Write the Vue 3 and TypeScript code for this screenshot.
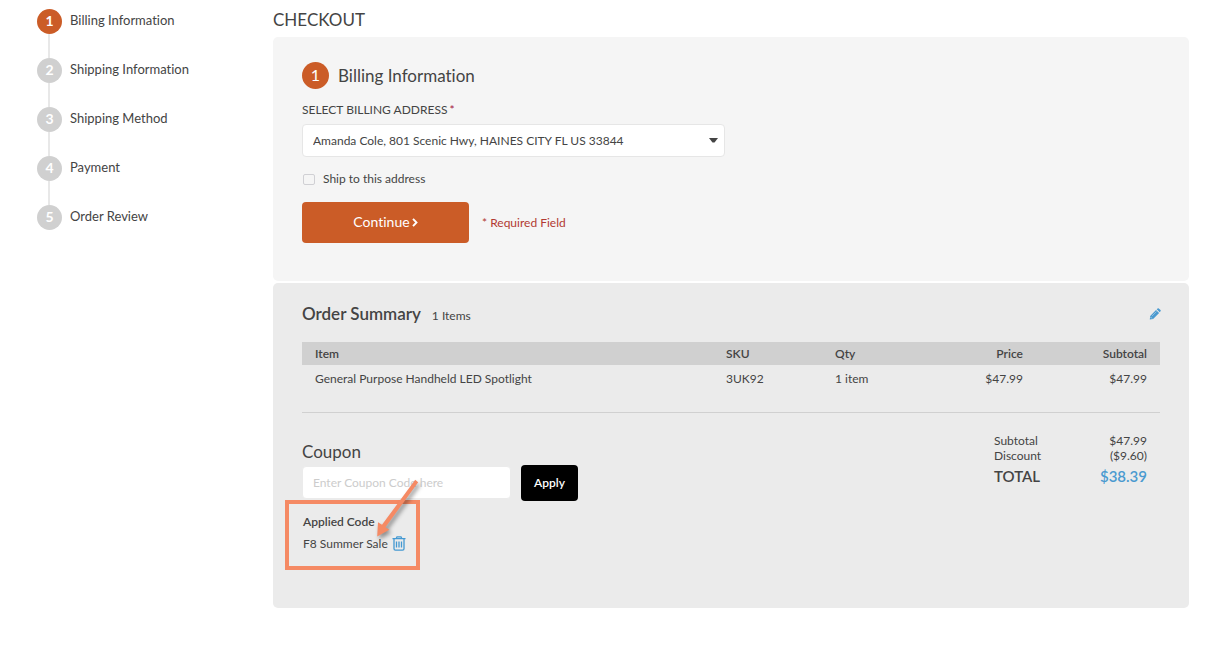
<script setup lang="ts">
import { ref } from 'vue'

interface Step {
  id: number
  label: string
}

interface LineItem {
  name: string
  sku: string
  qty: string
  price: string
  subtotal: string
}

const steps: Step[] = [
  { id: 1, label: 'Billing Information' },
  { id: 2, label: 'Shipping Information' },
  { id: 3, label: 'Shipping Method' },
  { id: 4, label: 'Payment' },
  { id: 5, label: 'Order Review' },
]
const currentStep = ref(1)

const addresses = ['Amanda Cole, 801 Scenic Hwy, HAINES CITY FL US 33844']
const address = ref(addresses[0])
const shipHere = ref(false)
const coupon = ref('')

const items: LineItem[] = [
  {
    name: 'General Purpose Handheld LED Spotlight',
    sku: '3UK92',
    qty: '1 item',
    price: '$47.99',
    subtotal: '$47.99',
  },
]
</script>

<template>
  <div class="page">
    <nav class="sidebar" aria-label="Checkout progress">
      <ol class="steps">
        <li v-for="step in steps" :key="step.id" class="step" :class="{ active: step.id === currentStep }">
          <span class="dot">{{ step.id }}</span>
          <span class="step-label">{{ step.label }}</span>
        </li>
      </ol>
    </nav>

    <main class="main">
      <h1 class="title">CHECKOUT</h1>

      <section class="panel billing">
        <h2 class="billing-head"><span class="num">1</span><span>Billing Information</span></h2>
        <label class="field-label" for="address">SELECT BILLING ADDRESS<span class="req">*</span></label>
        <div class="select-wrap">
          <select id="address" v-model="address" class="select">
            <option v-for="a in addresses" :key="a" :value="a">{{ a }}</option>
          </select>
          <svg class="caret" width="9" height="5" viewBox="0 0 9 5" aria-hidden="true">
            <path d="M0 0h9L5.500 4.500h-2z" fill="#444" />
          </svg>
        </div>
        <div class="check-row">
          <input id="ship" v-model="shipHere" class="check" type="checkbox" />
          <label for="ship">Ship to this address</label>
        </div>
        <div class="actions">
          <button class="continue" type="button">
            <span>Continue</span>
            <svg width="6" height="9" viewBox="0 0 6 9" aria-hidden="true">
              <path d="M1 .8l3.500 3.700L1 8.200" fill="none" stroke="#fff" stroke-width="1.900" />
            </svg>
          </button>
          <span class="required">* Required Field</span>
        </div>
      </section>

      <section class="panel summary">
        <header class="summary-head">
          <h2>Order Summary</h2>
          <span class="count">1 Items</span>
          <button class="icon-button edit" type="button" aria-label="Edit order">
            <svg width="12" height="12" viewBox="0 0 12 12" aria-hidden="true">
              <path d="M7 1.900l3.100 3.100-6 6L.8 11.500l.4-3.600zM7.700 1.200l.9-.8q.6-.5 1.200 0l1.700 1.700q.5.600 0 1.200l-.8.900z" fill="#4a9ad0" />
              <path d="M2.900 8.100l4.600-4.600" stroke="#b9d4e5" stroke-width=".6" />
              <path d="M1.600 9.100l1.300 1.300" stroke="#d9e4eb" stroke-width=".8" />
            </svg>
          </button>
        </header>

        <table class="items">
          <thead>
            <tr>
              <th scope="col">Item</th>
              <th class="c-sku" scope="col">SKU</th>
              <th class="c-qty" scope="col">Qty</th>
              <th class="c-price right" scope="col">Price</th>
              <th class="c-sub right" scope="col">Subtotal</th>
            </tr>
          </thead>
          <tbody>
            <tr v-for="item in items" :key="item.sku">
              <td>{{ item.name }}</td>
              <td>{{ item.sku }}</td>
              <td>{{ item.qty }}</td>
              <td class="right">{{ item.price }}</td>
              <td class="right">{{ item.subtotal }}</td>
            </tr>
          </tbody>
        </table>

        <div class="lower">
          <form class="coupon" @submit.prevent>
            <label class="coupon-title" for="coupon">Coupon</label>
            <div class="coupon-row">
              <input id="coupon" v-model="coupon" class="coupon-input" type="text" placeholder="Enter Coupon Code here" />
              <button class="apply" type="submit">Apply</button>
            </div>
            <div class="applied">
              <svg class="arrow" width="60" height="76" viewBox="0 0 60 76" aria-hidden="true">
                <path d="M49.200 6.800L16 51.800l-4-2.600-.8 14.300 12.200-6.800-3.900-2.500L52.200 9.200z" fill="#f58a64" />
              </svg>
              <h3>Applied Code</h3>
              <p class="code">
                <span>F8 Summer Sale</span>
                <button class="icon-button" type="button" aria-label="Remove coupon">
                  <svg width="14" height="16" viewBox="0 0 14 16" aria-hidden="true">
                    <path
                      d="M.5 2.700h13M4.200 2.500L5 .8h4l.8 1.700M2 3v9.800q0 1.400 1.400 1.400h7.200q1.400 0 1.400-1.400V3M4.500 5.500v6M7 5.500v6M9.500 5.500v6"
                      fill="none"
                      stroke="#4499d2"
                      stroke-width="1.300"
                    />
                  </svg>
                </button>
              </p>
            </div>
          </form>

          <table class="totals">
            <tbody>
              <tr>
                <th scope="row">Subtotal</th>
                <td>$47.99</td>
              </tr>
              <tr>
                <th scope="row">Discount</th>
                <td>($9.60)</td>
              </tr>
              <tr class="grand">
                <th scope="row">TOTAL</th>
                <td>$38.39</td>
              </tr>
            </tbody>
          </table>
        </div>
      </section>
    </main>
  </div>
</template>

<style>
body {
  margin: 0;
  background: #fff;
}
</style>

<style scoped>
.page {
  display: flex;
  padding: 9px 42px 42px 37px;
  font-family: Lato, "Liberation Sans", sans-serif;
  font-size: 12px;
  line-height: 16px;
  font-variant-ligatures: none;
  color: #444;
}
button,
input,
select {
  font-family: inherit;
  font-variant-ligatures: inherit;
  color: inherit;
}
h1, h2, h3, p {
  margin: 0;
  font-weight: 400;
}
.sidebar {
  flex: 0 0 236px;
}
.steps {
  list-style: none;
  margin: 0;
  padding: 0;
}
.step {
  position: relative;
  display: flex;
  gap: 8px;
  height: 49px;
}
.step:not(:last-child)::before {
  content: "";
  position: absolute;
  left: 11px;
  top: 25px;
  width: 2px;
  height: 24px;
  background: #e8e8e8;
}
.dot {
  width: 25px;
  height: 25px;
  border-radius: 50%;
  background: #d0d0d0;
  color: #fff;
  font-size: 14px;
  font-weight: 700;
  line-height: 24px;
  text-align: center;
}
.active .dot {
  background: #cb5c27;
}
.step-label {
  font-size: 13px;
  line-height: 23px;
}
.main {
  flex: 1;
  min-width: 0;
}
.title {
  font-size: 17px;
  line-height: 22px;
  margin-bottom: 6px;
}
.panel {
  padding: 0 29px;
  border-radius: 5px;
}
.billing {
  padding-top: 25px;
  padding-bottom: 38px;
  background: #f5f5f5;
}
.billing-head {
  display: flex;
  align-items: center;
  gap: 9px;
  font-size: 17px;
  line-height: 26px;
}
.num {
  width: 27px;
  height: 27px;
  border-radius: 50%;
  background: #cb5c27;
  color: #fff;
  font-size: 16px;
  text-align: center;
}
.field-label {
  display: block;
  margin: 13px 0 6px;
}
.req {
  margin-left: 2px;
  color: #a3123a;
}
.select-wrap {
  position: relative;
  width: 423px;
  max-width: 100%;
}
.select {
  display: block;
  appearance: none;
  width: 100%;
  height: 33px;
  padding: 0 26px 0 10px;
  border: 1px solid #e6e6e6;
  border-radius: 4px;
  background: #fff;
  font-size: 12px;
}
.caret {
  position: absolute;
  right: 7px;
  top: 14px;
  pointer-events: none;
}
.check-row {
  display: flex;
  align-items: center;
  gap: 8px;
  margin-top: 14px;
}
.check {
  appearance: none;
  box-sizing: border-box;
  width: 12px;
  height: 11px;
  margin: 0 0 0 1px;
  border: 1px solid #d0d0d4;
  border-radius: 2px;
}
.check:checked {
  background: #cb5c27;
}
.actions {
  display: flex;
  align-items: center;
  gap: 13px;
  margin-top: 15px;
}
.continue {
  display: flex;
  align-items: center;
  justify-content: center;
  gap: 2px;
  width: 167px;
  height: 41px;
  padding: 0 0 2px;
  border: 0;
  border-radius: 4px;
  background: #cb5c27;
  color: #fff;
  font-size: 14px;
}
.continue svg {
  margin-top: 2px;
}
.required {
  color: #b23a32;
}
.summary {
  margin-top: 2px;
  padding-top: 20px;
  padding-bottom: 38px;
  background: #ebebeb;
}
.summary-head {
  display: flex;
  align-items: baseline;
  height: 39px;
}
.summary-head h2 {
  font-size: 17px;
  line-height: 22px;
  font-weight: 600;
}
.count {
  margin-left: 11px;
}
.icon-button {
  padding: 0;
  border: 0;
  background: none;
}
.icon-button svg {
  display: block;
}
.edit {
  align-self: flex-start;
  margin: 5px -1px 0 auto;
}
.items {
  width: 100%;
  table-layout: fixed;
  border-collapse: collapse;
}
.items th,
.items td {
  box-sizing: border-box;
  padding: 0 13px;
  text-align: left;
}
.items th {
  height: 23px;
  background: #d0d0d0;
  font-weight: 600;
}
.items td {
  padding-top: 6px;
}
.items .right {
  text-align: right;
}
.c-sku { width: 109px; }
.c-qty { width: 107px; }
.c-price { width: 107px; }
.c-sub { width: 124px; }
.lower {
  display: flex;
  justify-content: space-between;
  align-items: flex-start;
  margin-top: 25px;
  border-top: 1px solid #d0d0d0;
}
.coupon {
  padding-top: 27px;
}
.coupon-title {
  display: block;
  font-size: 17px;
  line-height: 24px;
}
.coupon-row {
  display: flex;
  align-items: center;
  gap: 10px;
  margin-top: 1px;
}
.coupon-input {
  box-sizing: border-box;
  width: 209px;
  height: 33px;
  margin-bottom: 1px;
  padding: 0 10px;
  border: 1px solid #ebebeb;
  border-radius: 4px;
  background: #fff;
  font-size: 12px;
}
.coupon-input::placeholder {
  color: #ccc;
}
.apply {
  width: 57px;
  height: 36px;
  padding: 0 0 1px;
  border: 0;
  border-radius: 4px;
  background: #000;
  color: #fff;
  font-size: 12px;
  font-weight: 600;
}
.applied {
  position: relative;
  box-sizing: border-box;
  width: 135px;
  height: 70px;
  margin-left: -17px;
  margin-top: -1px;
  padding: 10px 0 0 14px;
  border: 4px solid #f58a64;
}
.applied h3 {
  font-size: 12px;
  font-weight: 600;
  line-height: 16px;
}
.code {
  display: flex;
  align-items: center;
  gap: 4px;
  margin-top: 6px;
}
.arrow {
  position: absolute;
  left: 77px;
  top: -31px;
  filter: drop-shadow(2px 3px 2px rgba(0, 0, 0, 0.4));
  pointer-events: none;
}
.totals {
  width: 153px;
  margin: 20px 13px 0 0;
  border-collapse: collapse;
}
.totals th,
.totals td {
  padding: 0;
  font-weight: 400;
  line-height: 15px;
  text-align: left;
}
.totals td {
  text-align: right;
}
.totals .grand th,
.totals .grand td {
  font-size: 15px;
  line-height: 26px;
  font-weight: 600;
}
.totals .grand td {
  color: #4a9ad0;
}
</style>
